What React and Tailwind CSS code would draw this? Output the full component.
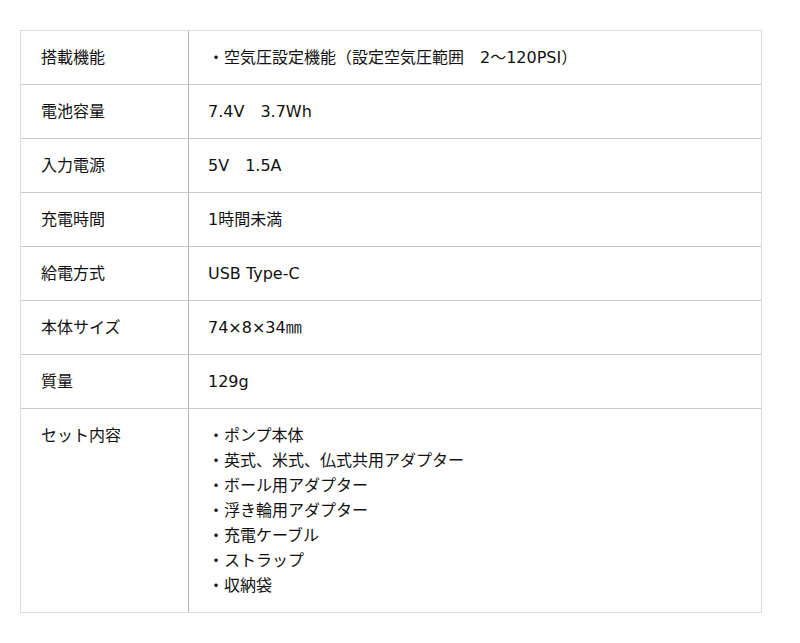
export default function App() {
  const rows = [
    ["搭載機能", ["・空気圧設定機能（設定空気圧範囲　2〜120PSI）"]],
    ["電池容量", ["7.4V　3.7Wh"]],
    ["入力電源", ["5V　1.5A"]],
    ["充電時間", ["1時間未満"]],
    ["給電方式", ["USB Type-C"]],
    ["本体サイズ", ["74×8×34㎜"]],
    ["質量", ["129g"]],
    [
      "セット内容",
      [
        "・ポンプ本体",
        "・英式、米式、仏式共用アダプター",
        "・ボール用アダプター",
        "・浮き輪用アダプター",
        "・充電ケーブル",
        "・ストラップ",
        "・収納袋",
      ],
    ],
  ];
  return (
    <div
      className="bg-white w-[800px] h-[643px] pt-[30px] px-[20px] text-[#111] text-[16px] leading-[25px]"
      style={{ fontFamily: '"DejaVu Sans", "Noto Sans CJK JP", sans-serif' }}
    >
      <div className="w-[742px] border border-[#dcdcdc]">
        {rows.map(([label, vals], i) => (
          <div
            key={i}
            className={`flex ${i > 0 ? "border-t border-[#c8c8c8]" : ""}`}
          >
            <div className="w-[168px] shrink-0 pl-[20px] py-[14px] border-r border-[#b4b4b4]">
              {label}
            </div>
            <div className="flex-1 pl-[19px] py-[14px]">
              {vals.map((v, j) => (
                <div key={j}>{v}</div>
              ))}
            </div>
          </div>
        ))}
      </div>
    </div>
  );
}
